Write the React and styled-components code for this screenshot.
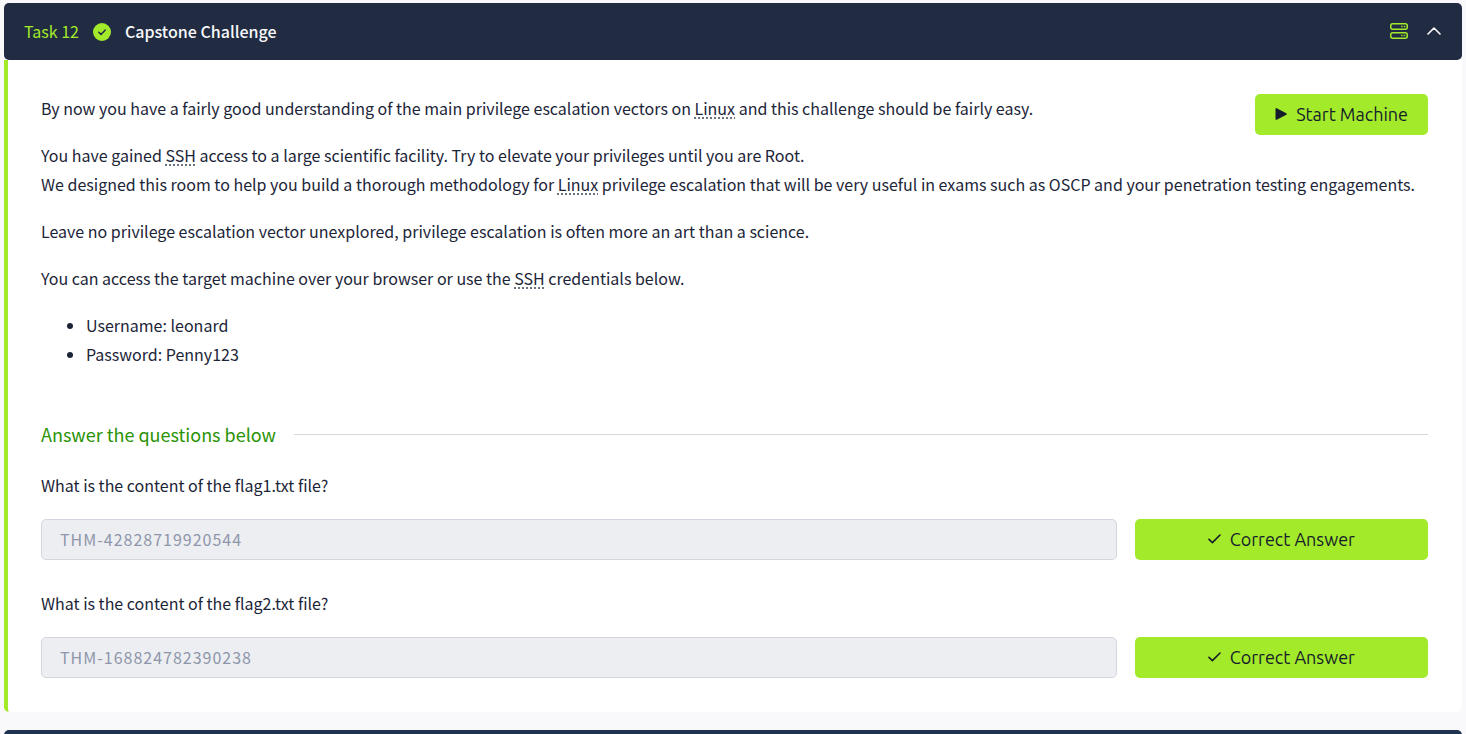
import React from "react";
import styled, { createGlobalStyle } from "styled-components";

const textFont = `"Source Sans Pro", "Noto Sans CJK SC", "Open Sans", sans-serif`;
const buttonFont = `Ubuntu, "Noto Sans", sans-serif`;

const GlobalStyle = createGlobalStyle`
  *, *::before, *::after { box-sizing: border-box; }
  body {
    margin: 0;
    background: #f9f9fb;
    color: #1c2538;
    font-family: ${textFont};
    font-size: 16px;
    line-height: 29px;
  }
`;

const Page = styled.main`
  display: flex;
  flex-direction: column;
  gap: 18px;
  height: 100vh;
  padding: 3px 4px;
  overflow-y: auto;
  scrollbar-width: none;
`;

const Task = styled.section`
  flex: none;
`;

const TaskHeader = styled.header`
  display: flex;
  align-items: center;
  justify-content: space-between;
  height: 57px;
  padding: 0 21px 0 20px;
  border-radius: 5px;
  background: ${(p) => (p.$collapsed ? "#1f3350" : "#212c42")};
`;

const HeaderGroup = styled.div`
  display: flex;
  align-items: center;
  gap: ${(p) => p.$gap}px;
`;

const TaskNumber = styled.span`
  color: #a3ea2a;
`;

const TaskTitle = styled.h2`
  margin: 0;
  color: #f9f9fb;
  font-size: 16px;
  font-weight: 500;
`;

const IconButton = styled.button`
  display: flex;
  padding: 0 0 2px;
  border: 0;
  background: none;
  color: ${(p) => p.$color};
  cursor: pointer;
`;

const TaskBody = styled.div`
  padding: 34px 34px 34px 33px;
  border-left: 4px solid #a3ea2a;
  border-radius: 0 0 5px 5px;
  background: #fff;
`;

const Description = styled.div`
  p { margin: 0 0 18px; }
`;

const Term = styled.abbr`
  text-decoration: underline dotted #6b7280 2px;
  text-underline-offset: 2px;
`;

const Credentials = styled.ul`
  margin: 0;
  padding-left: 45px;
`;

const ActionButton = styled.button`
  display: flex;
  align-items: center;
  justify-content: center;
  gap: 9px;
  height: 41px;
  padding: 0 20px 2px;
  border: 0;
  border-radius: 5px;
  background: #a3ea2a;
  color: #151c2b;
  font-family: ${buttonFont};
  font-size: 18px;
  line-height: 24px;
  white-space: nowrap;
  cursor: pointer;
`;

const StartButton = styled(ActionButton)`
  float: right;
`;

const SectionHeading = styled.div`
  display: flex;
  align-items: center;
  gap: 18px;
  margin-top: 51px;

  h3 {
    margin: 0;
    color: #2a9306;
    font-size: 18px;
    font-weight: 400;
  }

  hr {
    flex: 1;
    margin: 0;
    border: 0;
    border-top: 1px solid #d3d8df;
  }
`;

const Question = styled.form`
  margin-top: ${(p) => (p.$first ? 22 : 29)}px;

  label {
    display: block;
    margin-bottom: 19px;
  }
`;

const AnswerRow = styled.div`
  display: grid;
  grid-template-columns: 11fr 3fr;
  gap: 18px;
`;

const AnswerInput = styled.input`
  width: 100%;
  min-width: 0;
  height: 41px;
  padding: 0 18px 2px;
  border: 1px solid #d3d6df;
  border-radius: 5px;
  background: #edeef2;
  color: #8e96aa;
  font-family: ${textFont};
  font-size: 16px;
  letter-spacing: 1px;
`;

const DoneIcon = () => (
  <svg width="18" height="18" viewBox="0 0 18 18" aria-hidden="true">
    <circle cx="9" cy="9" r="9" fill="#a3ea2a" />
    <path d="M5.8 9.2l2.2 2.2 4.3-4.4" fill="none" stroke="#212c42" strokeWidth="1.5" strokeLinecap="round" strokeLinejoin="round" />
  </svg>
);

const ServerIcon = () => (
  <svg width="18" height="16" viewBox="0 0 18 16" fill="none" stroke="currentColor" aria-hidden="true">
    <rect x="0.75" y="0.75" width="16.5" height="5.5" rx="2" strokeWidth="1.5" />
    <rect x="0.75" y="9.75" width="16.5" height="5.5" rx="2" strokeWidth="1.5" />
    <path d="M11.2 3.5h1.4M13.8 3.5h1.4M11.2 12.5h1.4M13.8 12.5h1.4" strokeWidth="1.4" />
  </svg>
);

const ChevronUpIcon = () => (
  <svg width="14" height="8" viewBox="0 0 14 8" fill="none" aria-hidden="true">
    <path d="M1 7l6-6 6 6" stroke="currentColor" strokeWidth="1.6" strokeLinecap="round" strokeLinejoin="round" />
  </svg>
);

const PlayIcon = () => (
  <svg width="12" height="12" viewBox="0 0 12 12" aria-hidden="true">
    <path d="M1.3 0.9v10.2L11 6z" fill="currentColor" stroke="currentColor" strokeWidth="1.6" strokeLinejoin="round" />
  </svg>
);

const CheckIcon = () => (
  <svg width="13" height="10" viewBox="0 0 13 10" fill="none" aria-hidden="true">
    <path d="M1 5.4l3.4 3.2L12 1" stroke="currentColor" strokeWidth="1.6" strokeLinecap="round" strokeLinejoin="round" />
  </svg>
);

const questions = [
  { id: "flag1", text: "What is the content of the flag1.txt file?", answer: "THM-42828719920544" },
  { id: "flag2", text: "What is the content of the flag2.txt file?", answer: "THM-168824782390238" },
];

export default function App() {
  return (
    <>
      <GlobalStyle />
      <Page>
        <Task>
          <TaskHeader>
            <HeaderGroup $gap={14}>
              <TaskNumber>Task 12</TaskNumber>
              <DoneIcon />
              <TaskTitle>Capstone Challenge</TaskTitle>
            </HeaderGroup>
            <HeaderGroup $gap={19}>
              <IconButton $color="#a3ea2a" aria-label="Machine">
                <ServerIcon />
              </IconButton>
              <IconButton $color="#f9f9fb" aria-label="Collapse task">
                <ChevronUpIcon />
              </IconButton>
            </HeaderGroup>
          </TaskHeader>
          <TaskBody>
            <Description>
              <StartButton type="button">
                <PlayIcon />
                Start Machine
              </StartButton>
              <p>
                By now you have a fairly good understanding of the main privilege escalation vectors on <Term>Linux</Term> and
                this challenge should be fairly easy.
              </p>
              <p>
                You have gained <Term>SSH</Term> access to a large scientific facility. Try to elevate your privileges until
                you are Root.
                <br />
                We designed this room to help you build a thorough methodology for <Term>Linux</Term> privilege escalation
                that will be very useful in exams such as OSCP and your penetration testing engagements.
              </p>
              <p>
                Leave no privilege escalation vector unexplored, privilege escalation is often more an art than a science.
              </p>
              <p>
                You can access the target machine over your browser or use the <Term>SSH</Term> credentials below.
              </p>
              <Credentials>
                <li>Username: leonard</li>
                <li>Password: Penny123</li>
              </Credentials>
            </Description>
            <SectionHeading>
              <h3>Answer the questions below</h3>
              <hr />
            </SectionHeading>
            {questions.map((q, i) => (
              <Question key={q.id} $first={i === 0}>
                <label htmlFor={q.id}>{q.text}</label>
                <AnswerRow>
                  <AnswerInput id={q.id} defaultValue={q.answer} readOnly />
                  <ActionButton type="button">
                    <CheckIcon />
                    Correct Answer
                  </ActionButton>
                </AnswerRow>
              </Question>
            ))}
          </TaskBody>
        </Task>
        <Task>
          <TaskHeader $collapsed />
        </Task>
      </Page>
    </>
  );
}
